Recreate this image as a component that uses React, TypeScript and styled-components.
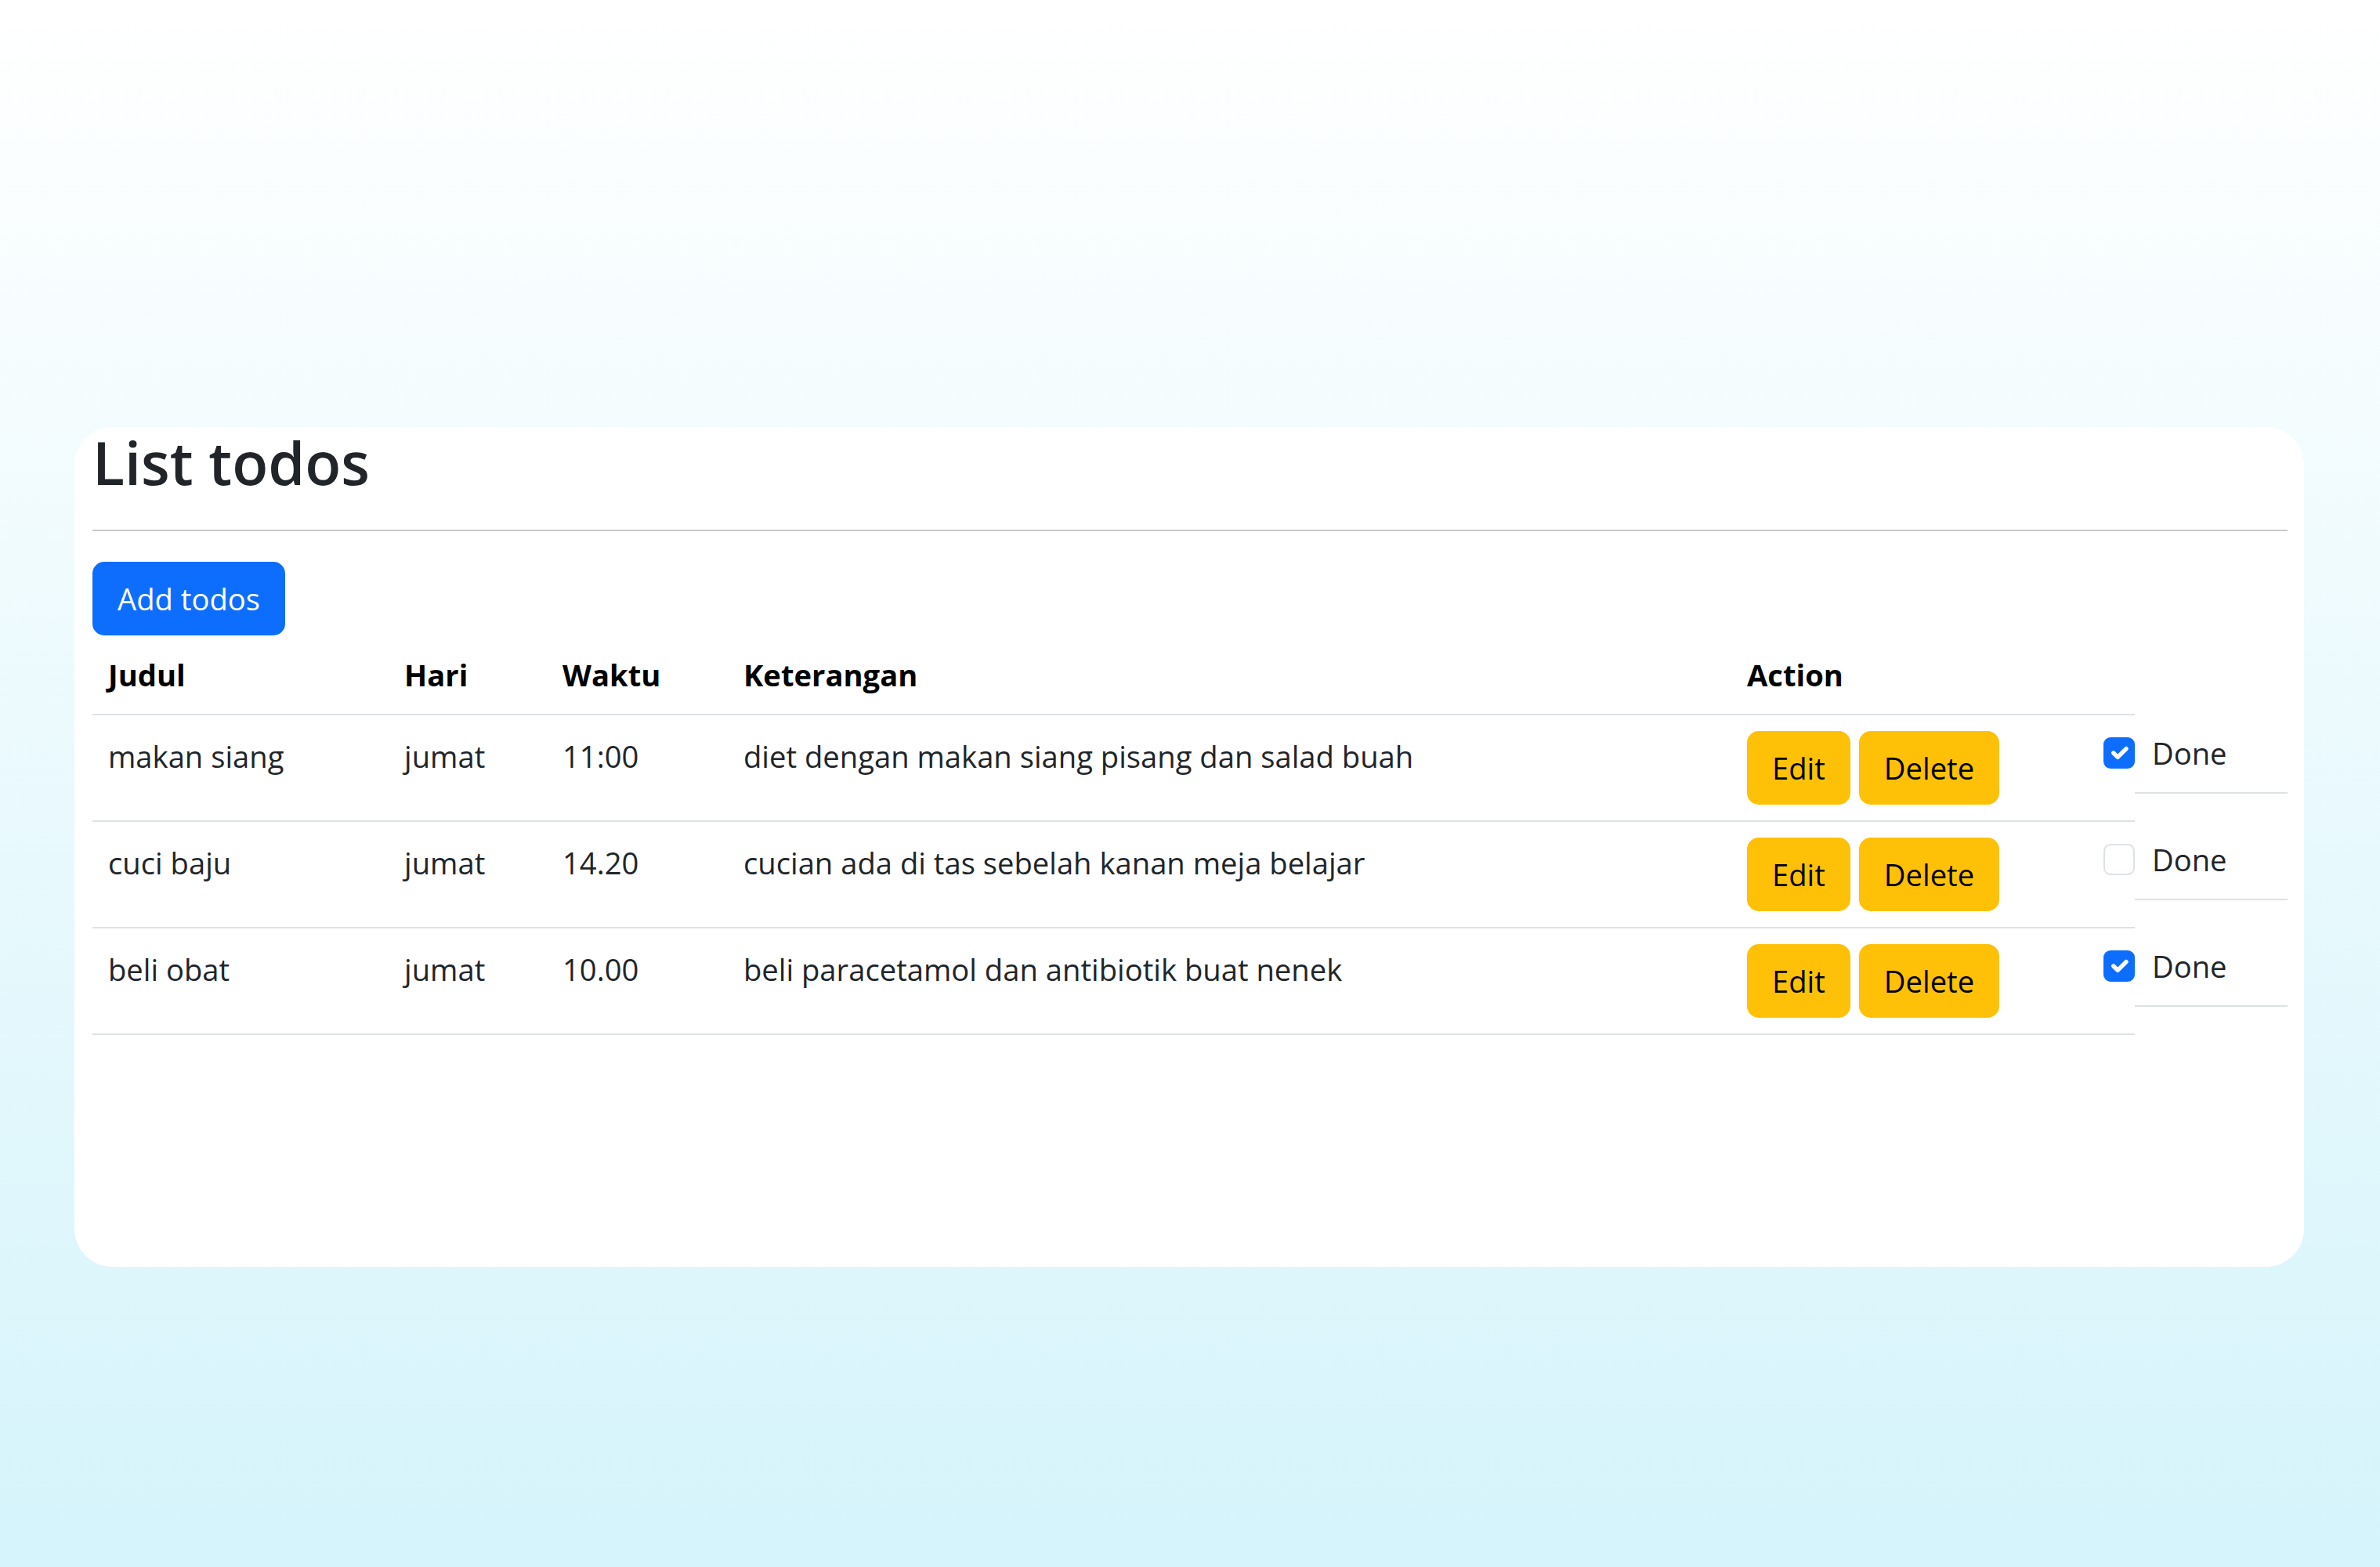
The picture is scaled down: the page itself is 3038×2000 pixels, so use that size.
import React, { useState } from "react";
import styled, { createGlobalStyle } from "styled-components";

type Todo = {
  id: number;
  judul: string;
  hari: string;
  waktu: string;
  keterangan: string;
  done: boolean;
};

const initialTodos: Todo[] = [
  {
    id: 1,
    judul: "makan siang",
    hari: "jumat",
    waktu: "11:00",
    keterangan: "diet dengan makan siang pisang dan salad buah",
    done: true,
  },
  {
    id: 2,
    judul: "cuci baju",
    hari: "jumat",
    waktu: "14.20",
    keterangan: "cucian ada di tas sebelah kanan meja belajar",
    done: false,
  },
  {
    id: 3,
    judul: "beli obat",
    hari: "jumat",
    waktu: "10.00",
    keterangan: "beli paracetamol dan antibiotik buat nenek",
    done: true,
  },
];

// column widths, padding included
const columns = [
  { key: "judul", label: "Judul", width: 378 },
  { key: "hari", label: "Hari", width: 202 },
  { key: "waktu", label: "Waktu", width: 231 },
  { key: "keterangan", label: "Keterangan", width: 1281 },
  { key: "action", label: "Action", width: 515 },
];

export default function App() {
  const [todos, setTodos] = useState(initialTodos);

  const toggle = (id: number) =>
    setTodos((list) =>
      list.map((t) => (t.id === id ? { ...t, done: !t.done } : t))
    );

  return (
    <>
      <GlobalStyle />
      <Page>
        <Card>
          <Title>List todos</Title>
          <Divider />
          <Button variant="primary">Add todos</Button>
          <TableRow>
            <Table>
              <colgroup>
                {columns.map((c) => (
                  <col key={c.key} style={{ width: c.width }} />
                ))}
              </colgroup>
              <thead>
                <tr>
                  {columns.map((c) => (
                    <Th key={c.key}>{c.label}</Th>
                  ))}
                </tr>
              </thead>
              <tbody>
                {todos.map((todo) => (
                  <tr key={todo.id}>
                    <Td>{todo.judul}</Td>
                    <Td>{todo.hari}</Td>
                    <Td>{todo.waktu}</Td>
                    <Td>{todo.keterangan}</Td>
                    <Td>
                      <Actions>
                        <Button variant="warning">Edit</Button>
                        <Button variant="warning">Delete</Button>
                      </Actions>
                    </Td>
                  </tr>
                ))}
              </tbody>
            </Table>
            <DoneList>
              {todos.map((todo) => (
                <DoneItem key={todo.id}>
                  <CheckBox
                    type="button"
                    checked={todo.done}
                    onClick={() => toggle(todo.id)}
                    aria-checked={todo.done}
                    role="checkbox"
                  >
                    {todo.done && (
                      <svg viewBox="0 0 20 20" width="100%" height="100%">
                        <path
                          fill="none"
                          stroke="#fff"
                          strokeLinecap="round"
                          strokeLinejoin="round"
                          strokeWidth="3"
                          d="m6 10 3 3 6-6"
                        />
                      </svg>
                    )}
                  </CheckBox>
                  <DoneLabel>Done</DoneLabel>
                </DoneItem>
              ))}
            </DoneList>
          </TableRow>
        </Card>
      </Page>
    </>
  );
}

const GlobalStyle = createGlobalStyle`
  * { box-sizing: border-box; }
  body {
    margin: 0;
    font-family: "Open Sans", "Noto Sans", sans-serif;
    color: #212529;
  }
`;

const Page = styled.div`
  min-height: 100vh;
  padding: 545px 97px 0 95px;
  background: linear-gradient(180deg, #ffffff 0%, #d5f4fb 100%);
`;

const Card = styled.div`
  background: #ffffff;
  border-radius: 49px;
  padding: 0 21px 296px 23px;
`;

const Title = styled.h1`
  margin: 0;
  font-size: 75.5px;
  line-height: 90px;
  font-weight: 600;
  color: #212529;
`;

const Divider = styled.hr`
  margin: 41px 0 39px;
  border: 0;
  border-top: 2px solid #c8c9ca;
`;

const Button = styled.button<{ variant: "primary" | "warning" }>`
  display: inline-block;
  font-family: inherit;
  font-size: 38.2px;
  line-height: 58px;
  padding: 16px 30px;
  border-radius: 15px;
  border: 2px solid
    ${(p) => (p.variant === "primary" ? "#0d6efd" : "#ffc107")};
  background: ${(p) => (p.variant === "primary" ? "#0d6efd" : "#ffc107")};
  color: ${(p) => (p.variant === "primary" ? "#ffffff" : "#000000")};
  cursor: pointer;
`;

const TableRow = styled.div`
  display: flex;
  align-items: flex-start;
`;

const Table = styled.table`
  flex: none;
  width: 2607px;
  table-layout: fixed;
  border-collapse: collapse;
  font-size: 38.2px;
`;

const Th = styled.th`
  text-align: left;
  font-weight: 700;
  color: #000;
  padding: 21px 20px 20px;
  line-height: 59px;
  border-bottom: 2px solid #dee2e6;
  vertical-align: bottom;
`;

const Td = styled.td`
  padding: 20px;
  line-height: 64px;
  vertical-align: top;
  border-bottom: 2px solid #dee2e6;
  color: #212529;
  white-space: nowrap;
`;

const Actions = styled.div`
  display: flex;
  gap: 11px;
`;

const DoneList = styled.div`
  flex: 1;
  margin-top: 66px;
`;

const DoneItem = styled.div`
  height: 136px;
  display: flex;
  align-items: flex-start;
  padding-top: 55px;
  border-bottom: 2px solid #dee2e6;
`;

const CheckBox = styled.button<{ checked: boolean }>`
  flex: none;
  width: 40px;
  height: 40px;
  margin: 9px 0 0 -40px;
  padding: 0;
  border-radius: 9px;
  border: 2px solid ${(p) => (p.checked ? "#0d6efd" : "#dee2e6")};
  background: ${(p) => (p.checked ? "#0d6efd" : "#ffffff")};
  cursor: pointer;

  svg {
    display: block;
  }
`;

const DoneLabel = styled.span`
  margin-left: 22px;
  font-size: 38.2px;
  line-height: 59px;
  color: #212529;
`;
